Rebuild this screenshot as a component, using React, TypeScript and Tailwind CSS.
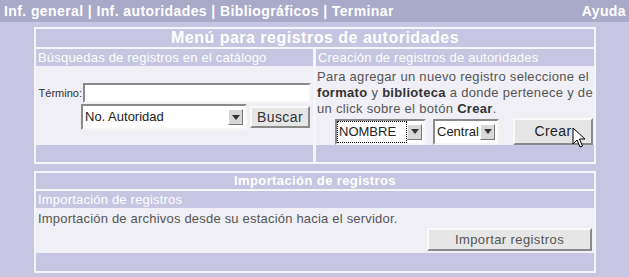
import React from "react";

const lav = "bg-[#c6c6e2]";

function Select({ label, className, dotted }: { label: string; className: string; dotted?: boolean }) {
  return (
    <div
      className={`flex items-stretch bg-white border-2 border-t-[#8a8a8a] border-l-[#8a8a8a] border-b-[#f6f6f6] border-r-[#f6f6f6] ${className}`}
    >
      <div
        className={`flex-1 flex items-center pl-[2px] text-[13px] text-[#222] ${
          dotted ? "outline outline-1 outline-dotted outline-black -outline-offset-1" : ""
        }`}
      >
        {label}
      </div>
      <div className="flex items-center">
        <div className="w-[15px] h-[16px] mr-[2px] bg-[#d8d8d8] border border-t-white border-l-white border-b-[#777] border-r-[#777] flex items-center justify-center">
          <svg width="8" height="5" viewBox="0 0 8 5">
            <polygon points="0,0 8,0 4,5" fill="#333" />
          </svg>
        </div>
      </div>
    </div>
  );
}

function Button({ label, className }: { label: string; className: string }) {
  return (
    <div
      className={`flex items-center justify-center bg-[#e6e6e6] border-2 border-t-[#fafafa] border-l-[#fafafa] border-b-[#8a8a8a] border-r-[#8a8a8a] text-[13px] tracking-[0.4px] ${className}`}
    >
      {label}
    </div>
  );
}

export default function App() {
  return (
    <div className={`w-[629px] h-[277px] ${lav} font-['Liberation_Sans',Arial,sans-serif] overflow-hidden relative`}>
      {/* Top bar */}
      <div className="h-[22px] bg-[#a9a9c9] flex items-center justify-between pl-[4px] pr-[3px] text-white font-bold text-[14px] tracking-[0.4px]">
        <span>Inf. general | Inf. autoridades | Bibliográficos | Terminar</span>
        <span>Ayuda</span>
      </div>

      {/* Panel 1 */}
      <div className="ml-[34px] mt-[5px] w-[562px] border-2 border-[#f5f5fa] bg-[#f5f5fa] flex flex-col gap-[2px]">
        <div className={`${lav} h-[18px] flex items-center justify-center text-white font-bold text-[16px] tracking-[0.5px]`}>
          Menú para registros de autoridades
        </div>
        <div className="grid grid-cols-[277px_278px] gap-x-[3px]">
          {/* Left column */}
          <div className="flex flex-col">
            <div className={`${lav} h-[17px] flex items-center pl-[2px] text-white text-[13px] tracking-[0.2px]`}>
              Búsquedas de registros en el catálogo
            </div>
            <div className="bg-[#efeff5] h-[79px] flex flex-col pt-[17px]">
              <div className="flex items-center">
                <span className="w-[47px] text-right text-[11px] text-[#333] pr-[1px]">Término:</span>
                <div className="w-[228px] h-[20px] bg-white border-2 border-t-[#8a8a8a] border-l-[#8a8a8a] border-b-[#f6f6f6] border-r-[#f6f6f6]" />
              </div>
              <div className="flex items-center mt-[1px] ml-[45px] gap-[3px]">
                <Select label="No. Autoridad" className="w-[166px] h-[26px] text-[14px]" />
                <Button label="Buscar" className="w-[60px] h-[22px] text-[#333] text-[14px]" />
              </div>
            </div>
            <div className={`${lav} h-[17px]`} />
          </div>

          {/* Right column */}
          <div className="flex flex-col">
            <div className={`${lav} h-[17px] flex items-center pl-[2px] text-white text-[13px] tracking-[0.2px]`}>
              Creación de registros de autoridades
            </div>
            <div className="bg-[#efeff5] h-[79px] flex flex-col">
              <p className="text-[13px] leading-[16px] text-[#555] tracking-[0.3px] pl-[1px] pt-[3px]">
                Para agregar un nuevo registro seleccione el{" "}
                <b className="text-[#333]">formato</b> y <b className="text-[#333]">biblioteca</b> a donde pertenece y de un click
                sobre el botón <b className="text-[#333]">Crear</b>.
              </p>
              <div className="flex items-center ml-[19px] mt-[1px]">
                <Select label="NOMBRE" className="w-[91px] h-[26px]" dotted />
                <Select label="Central" className="w-[66px] h-[26px] ml-[7px]" />
                <Button label="Crear" className="w-[80px] h-[27px] ml-[14px] text-[#222] text-[14px]" />
              </div>
            </div>
            <div className={`${lav} h-[17px]`} />
          </div>
        </div>
      </div>

      {/* Panel 2 */}
      <div className="ml-[34px] mt-[7px] w-[562px] border-2 border-[#f5f5fa] bg-[#f5f5fa] flex flex-col gap-[2px]">
        <div className={`${lav} h-[16px] flex items-center justify-center text-white font-bold text-[13px] tracking-[0.4px]`}>
          Importación de registros
        </div>
        <div className="flex flex-col">
          <div className={`${lav} h-[17px] flex items-center pl-[2px] text-white text-[13px] tracking-[0.2px]`}>
            Importación de registros
          </div>
          <div className="bg-[#efeff5] h-[45px] flex flex-col">
            <div className="text-[13px] text-[#555] tracking-[0.2px] pl-[2px] pt-[3px] leading-[16px]">
              Importación de archivos desde su estación hacia el servidor.
            </div>
            <div className="flex justify-end pr-[2px] mt-[1px]">
              <Button label="Importar registros" className="w-[165px] h-[23px] text-[#555]" />
            </div>
          </div>
          <div className={`${lav} h-[18px]`} />
        </div>
      </div>

      {/* Mouse cursor */}
      <svg className="absolute left-[572px] top-[127px]" width="14" height="22" viewBox="0 0 14 22">
        <path d="M1 1 L1 17 L5 13 L8 20 L10.5 19 L7.5 12 L13 12 Z" fill="white" stroke="black" strokeWidth="1" strokeLinejoin="miter" />
      </svg>
    </div>
  );
}
